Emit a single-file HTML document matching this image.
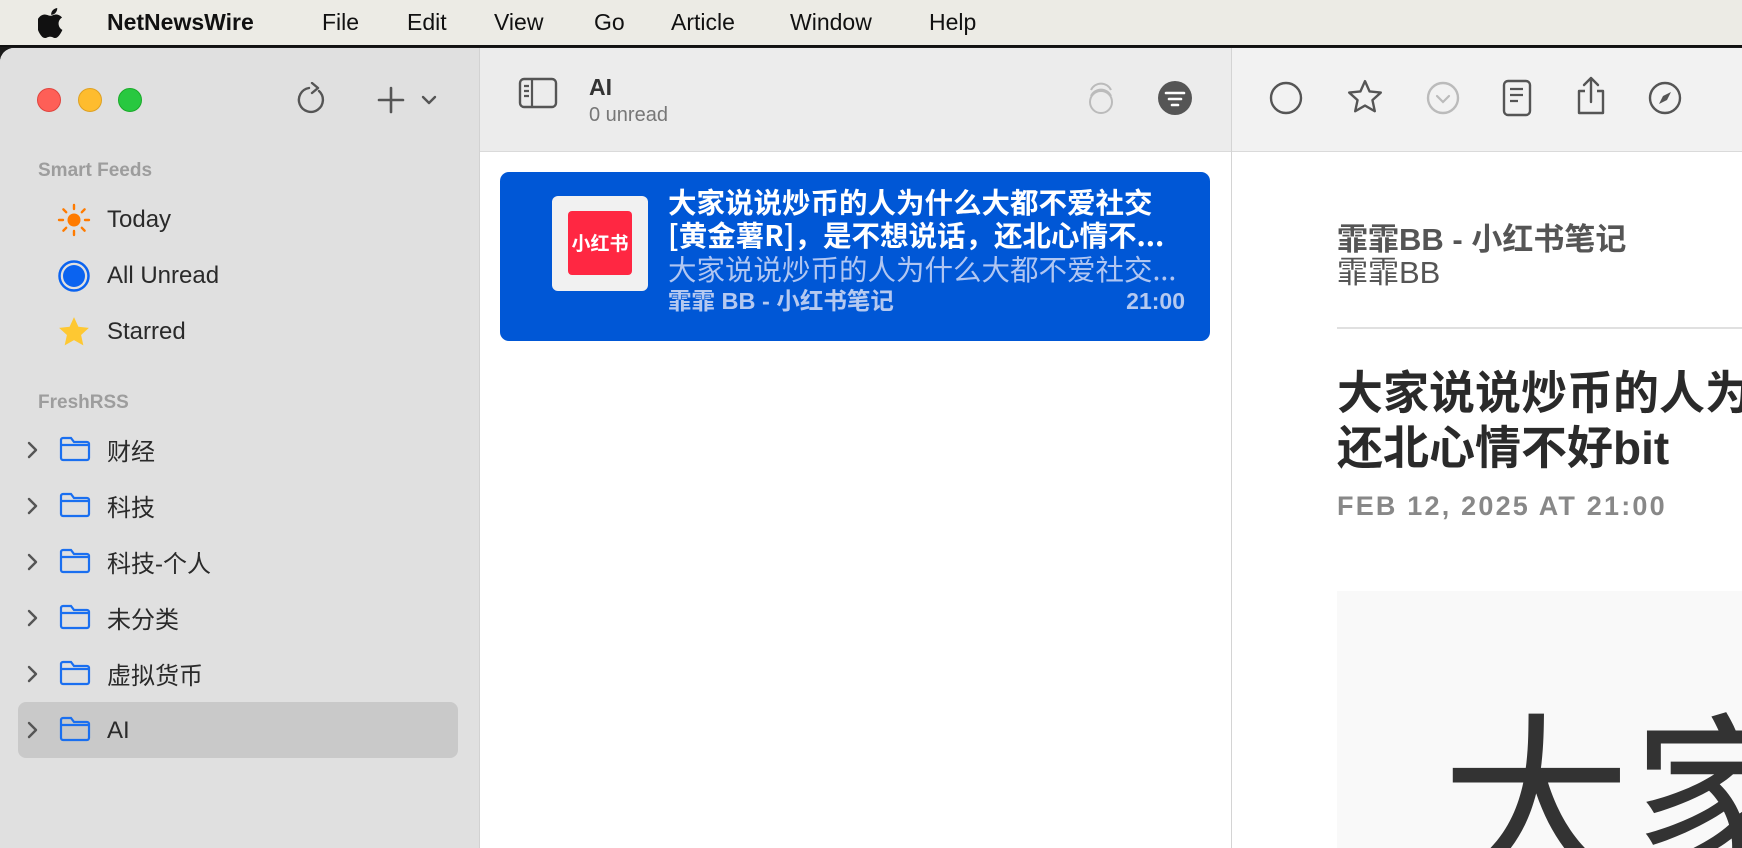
<!DOCTYPE html>
<html><head><meta charset="utf-8"><style>
*{margin:0;padding:0;box-sizing:border-box}
body{width:1742px;height:848px;overflow:hidden;background:#1a1a1a;font-family:"Liberation Sans","Noto Sans CJK SC",sans-serif;position:relative}
.abs{position:absolute}
#menu{left:0;top:0;width:1742px;height:47px;background:#ecebe5;border-bottom:2px solid #111}
#menu span{position:absolute;top:9px;font-size:23px;color:#111}
#win{left:0;top:48px;width:1742px;height:800px;background:#fff;border-top-left-radius:14px;overflow:hidden}
#side{left:0;top:0;width:480px;height:800px;background:#e0e0e0;border-right:1px solid #d2d2d2}
#mid{left:480px;top:0;width:751px;height:800px;background:#fff}
#midtb{left:0;top:0;width:751px;height:104px;background:#ececec;border-bottom:1px solid #dadada}
#right{left:1231px;top:0;width:511px;height:800px;background:#fff;border-left:1px solid #d4d4d4}
#righttb{left:0;top:0;width:511px;height:104px;background:#f2f2f2;border-bottom:1px solid #dadada}
.tl{width:24px;height:24px;border-radius:50%;top:88px;position:absolute}
.sec{font-size:19px;font-weight:bold;color:#9d9d9d;left:38px}
.item{font-size:24px;color:#2a2a2a;left:107px}
.chev{left:26px;z-index:3}
.fold{left:58px}
</style></head><body>
<div id="menu" class="abs">
<svg class="abs" style="left:38px;top:8px" width="28" height="30" viewBox="0 0 24 26"><path fill="#111" d="M16.5 0c.2 1.6-.5 3.1-1.4 4.1-.9 1.1-2.4 1.9-3.8 1.8-.2-1.5.5-3.1 1.4-4C13.6.9 15.2.1 16.5 0zM21 19c-.6 1.4-.9 2-1.7 3.2-1.1 1.7-2.600 3.8-4.5 3.8-1.7 0-2.1-1.1-4.4-1.1s-2.8 1.1-4.5 1.1c-1.9 0-3.3-1.9-4.4-3.6C-1.5 17.6-1.8 11.9.2 8.9c1.4-2.1 3.5-3.3 5.5-3.3s3.3 1.1 5 1.1c1.6 0 2.6-1.1 5-1.1 1.8 0 3.7 1 5 2.7-4.4 2.4-3.7 8.7.3 10.7z"/></svg>
<span style="left:107px;font-weight:bold">NetNewsWire</span>
<span style="left:322px">File</span><span style="left:407px">Edit</span><span style="left:494px">View</span><span style="left:594px">Go</span><span style="left:671px">Article</span><span style="left:790px">Window</span><span style="left:929px">Help</span>
</div>
<div id="win" class="abs">
<div id="side" class="abs">
<div class="tl" style="left:37px;top:40px;background:#fe5f57;border:1px solid #e0443e"></div>
<div class="tl" style="left:78px;top:40px;background:#febc2e;border:1px solid #dea123"></div>
<div class="tl" style="left:118px;top:40px;background:#28c840;border:1px solid #1aab29"></div>
<svg class="abs" style="left:297px;top:34px" width="32" height="36" viewBox="0 0 32 36"><path d="M12 6 A12 12 0 1 0 22 9" fill="none" stroke="#555" stroke-width="2.4" stroke-linecap="round"/><path d="M15 1 L21 6 L15 11" fill="none" stroke="#555" stroke-width="2.4" stroke-linecap="round" stroke-linejoin="round"/></svg>
<svg class="abs" style="left:376px;top:37px" width="30" height="30"><path d="M15 3V27M3 15H27" stroke="#555" stroke-width="2.6" stroke-linecap="round"/></svg>
<svg class="abs" style="left:421px;top:46px" width="16" height="12"><path d="M2 3L8 9L14 3" fill="none" stroke="#555" stroke-width="2.4" stroke-linecap="round" stroke-linejoin="round"/></svg>
<div class="abs sec" style="top:112px">Smart Feeds</div>
<svg class="abs" style="left:57px;top:155px" width="34" height="34" viewBox="0 0 34 34"><circle cx="17" cy="17" r="6.5" fill="#ff7b00"/><g stroke="#ff7b00" stroke-width="2.4" stroke-linecap="round"><path d="M17 2v4M17 28v4M2 17h4M28 17h4M6.4 6.4l2.8 2.8M24.8 24.8l2.8 2.8M6.4 27.6l2.8-2.8M24.8 9.2l2.8-2.8"/></g></svg>
<div class="abs item" style="top:158px">Today</div>
<svg class="abs" style="left:57px;top:211px" width="34" height="34"><circle cx="17" cy="17" r="14.5" fill="none" stroke="#0a63f0" stroke-width="2.5"/><circle cx="17" cy="17" r="11" fill="#0a63f0"/></svg>
<div class="abs item" style="top:214px">All Unread</div>
<svg class="abs" style="left:57px;top:267px" width="34" height="34" viewBox="0 0 24 24"><path d="M12 1.5l3.1 6.8 7.4.8-5.5 5 1.6 7.3L12 17.7l-6.6 3.7 1.6-7.3-5.5-5 7.4-.8z" fill="#fec832"/></svg>
<div class="abs item" style="top:270px">Starred</div>
<div class="abs sec" style="top:344px">FreshRSS</div>
<div class="abs" style="left:18px;top:654px;width:440px;height:56px;background:#c9c9c9;border-radius:8px"></div>
<div id="folders"></div>
</div>
<div id="mid" class="abs">
<div id="midtb" class="abs">
<svg class="abs" style="left:38px;top:29px" width="40" height="32"><rect x="2" y="2" width="36" height="28" rx="4" fill="none" stroke="#555" stroke-width="2.4"/><path d="M14 2V30M6 9h5M6 14h5M6 19h5" stroke="#555" stroke-width="2.2"/></svg>
<div class="abs" style="left:109px;top:26px;font-size:23px;font-weight:bold;color:#333">AI</div>
<div class="abs" style="left:109px;top:56px;font-size:20px;color:#777">0 unread</div>
<svg class="abs" style="left:606px;top:30px" width="30" height="38"><g fill="none" stroke="#bbb" stroke-width="2"><ellipse cx="15" cy="24" rx="11" ry="11"/><path d="M5 18a11 11 0 0 1 20 0M5 12a11 11 0 0 1 20 0"/></g></svg>
<svg class="abs" style="left:677px;top:32px" width="36" height="36"><circle cx="18" cy="18" r="17" fill="#555"/><path d="M9 13h18M12 19h12M15 25h6" stroke="#fff" stroke-width="2.6" stroke-linecap="round"/></svg>
</div>
<div class="abs" style="left:20px;top:124px;width:710px;height:169px;background:#0057d6;border-radius:9px">
<div class="abs" style="left:52px;top:24px;width:96px;height:95px;background:#f1f1f1;border-radius:6px"></div>
<div class="abs" style="left:68px;top:39px;width:64px;height:64px;background:#ff2742;border-radius:4px;color:#fff;font-weight:bold;font-size:19px;text-align:center;line-height:64px;font-family:'Noto Sans CJK SC',sans-serif">小红书</div>
<div class="abs" style="left:168px;top:13px;width:530px;color:#fff;font-weight:bold;font-size:28.5px;line-height:33px;font-family:'Noto Sans CJK SC',sans-serif;white-space:nowrap;overflow:hidden">大家说说炒币的人为什么大都不爱社交<br>[黄金薯R]，是不想说话，还北心情不...</div>
<div class="abs" style="left:168px;top:80px;color:#b0c6f2;font-size:28.5px;line-height:33px;font-family:'Noto Sans CJK SC',sans-serif;white-space:nowrap">大家说说炒币的人为什么大都不爱社交...</div>
<div class="abs" style="left:168px;top:114px;color:#b5c9f0;font-weight:bold;font-size:23.5px;line-height:30px;font-family:'Liberation Sans','Noto Sans CJK SC',sans-serif">霏霏 BB - 小红书笔记</div>
<div class="abs" style="right:25px;top:114px;color:#b5c9f0;font-weight:bold;font-size:23px;line-height:30px">21:00</div>
</div>
</div>
<div id="right" class="abs">
<div id="righttb" class="abs">
<svg class="abs" style="left:36px;top:32px" width="36" height="36"><circle cx="18" cy="18" r="15" fill="none" stroke="#555" stroke-width="2.4"/></svg>
<svg class="abs" style="left:114px;top:30px" width="38" height="38" viewBox="0 0 24 24"><path d="M12 2l2.9 6.5 7.1.7-5.3 4.8 1.5 7-6.2-3.6-6.2 3.6 1.5-7L2 9.2l7.1-.7z" fill="none" stroke="#555" stroke-width="1.5" stroke-linejoin="round"/></svg>
<svg class="abs" style="left:193px;top:32px" width="36" height="36"><circle cx="18" cy="18" r="15" fill="none" stroke="#bbb" stroke-width="2.4"/><path d="M12 16l6 6 6-6" fill="none" stroke="#bbb" stroke-width="2.2" stroke-linecap="round"/></svg>
<svg class="abs" style="left:269px;top:30px" width="32" height="40"><rect x="3" y="3" width="26" height="34" rx="4" fill="none" stroke="#555" stroke-width="2.4"/><path d="M9 11h13M9 17h13M9 23h8" stroke="#555" stroke-width="2.2"/></svg>
<svg class="abs" style="left:342px;top:27px" width="34" height="42"><path d="M11 16H5v22h24V16h-6" fill="none" stroke="#555" stroke-width="2.4" stroke-linejoin="round"/><path d="M17 27V3M10 10l7-7 7 7" fill="none" stroke="#555" stroke-width="2.4" stroke-linecap="round" stroke-linejoin="round"/></svg>
<svg class="abs" style="left:415px;top:32px" width="36" height="36"><circle cx="18" cy="18" r="15" fill="none" stroke="#555" stroke-width="2.4"/><path d="M24 12l-4 8-8 4 4-8z" fill="#555"/></svg>
</div>
<div class="abs" style="left:105px;top:175px;font-size:31px;line-height:33px;color:#555;font-family:'Liberation Sans','Noto Sans CJK SC',sans-serif"><b>霏霏BB - 小红书笔记</b><br>霏霏BB</div>
<div class="abs" style="left:105px;top:279px;width:420px;height:2px;background:#e0e0e0"></div>
<div class="abs" style="left:105px;top:318px;font-size:46px;line-height:55px;color:#2a2a2a;font-weight:bold;white-space:nowrap;font-family:'Liberation Sans','Noto Sans CJK SC',sans-serif">大家说说炒币的人为什么<br>还北心情不好bit</div>
<div class="abs" style="left:105px;top:443px;font-size:27px;color:#888;font-weight:bold;letter-spacing:2.2px">FEB 12, 2025 AT 21:00</div>
<div class="abs" style="left:105px;top:543px;width:420px;height:260px;background:#f9f9f9;overflow:hidden">
<div class="abs" style="left:104px;top:95px;font-size:190px;line-height:210px;color:#333;white-space:nowrap;font-family:'Noto Sans CJK SC',sans-serif">大家</div>
</div>
</div>
</div>
<script>
var names=["财经","科技","科技-个人","未分类","虚拟货币","AI"];
var h="";
names.forEach(function(n,i){var y=402+i*56;var ty=(n=="AI")?y-13:y-18;
h+='<svg class="abs chev" style="top:'+(y-10)+'px" width="14" height="20"><path d="M3 3l7 7-7 7" fill="none" stroke="#555" stroke-width="2.4" stroke-linecap="round" stroke-linejoin="round"/></svg>';
h+='<svg class="abs fold" style="top:'+(y-16)+'px;z-index:2" width="34" height="30"><path d="M3 6a2 2 0 0 1 2-2h8l3 4h13a2 2 0 0 1 2 2v14a2 2 0 0 1-2 2H5a2 2 0 0 1-2-2z M3 11h28" fill="none" stroke="#1a6ff0" stroke-width="2.2"/></svg>';
h+='<div class="abs item" style="top:'+ty+'px;z-index:2;font-family:\'Liberation Sans\',\'Noto Sans CJK SC\',sans-serif">'+n+'</div>';});
document.getElementById("folders").outerHTML=h;
</script>
</body></html>
